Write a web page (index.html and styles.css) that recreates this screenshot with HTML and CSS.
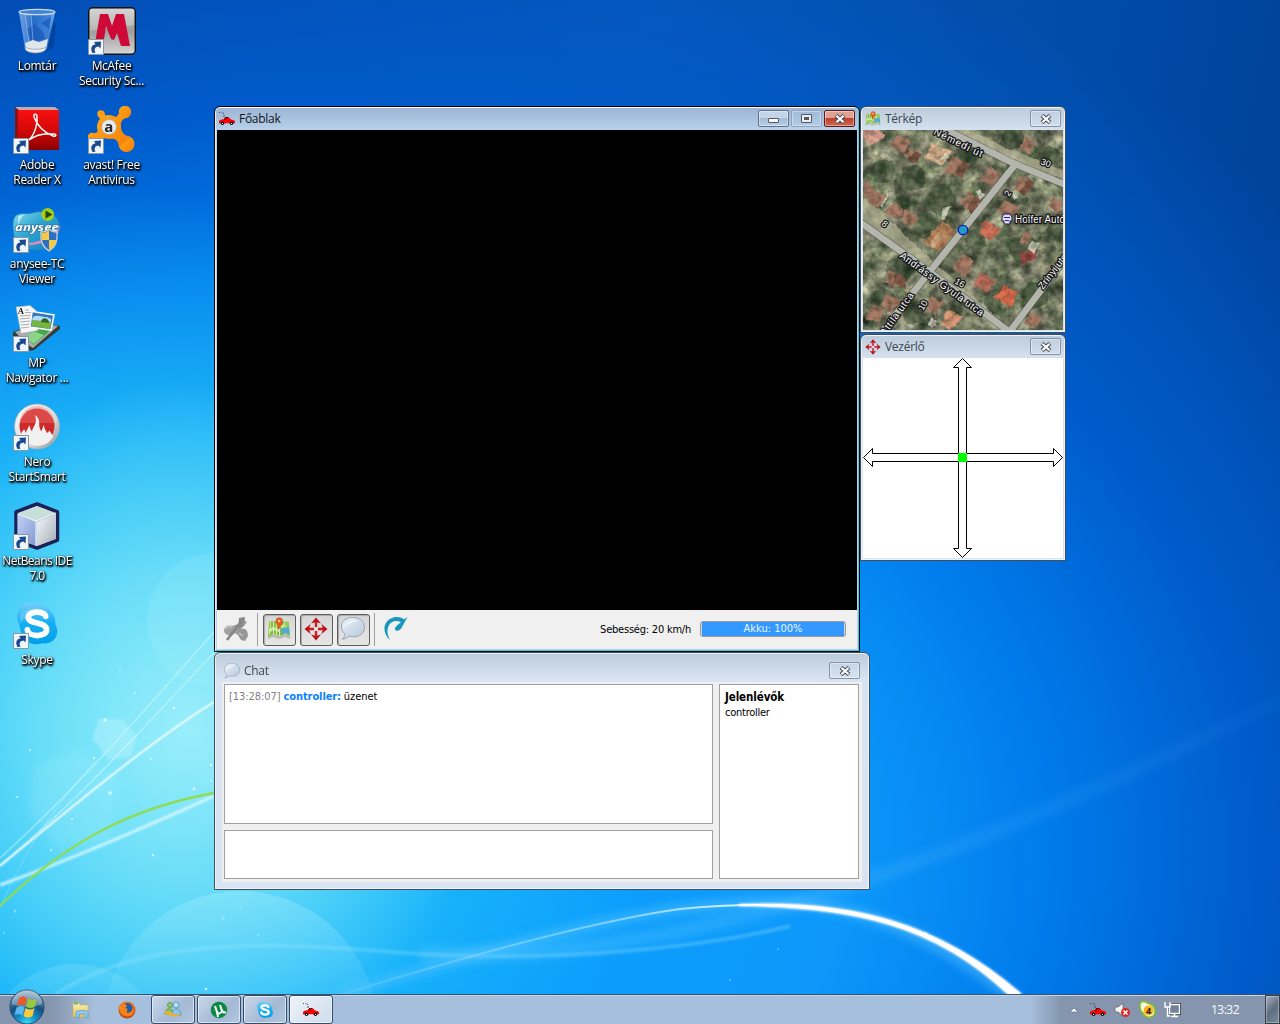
FILE: index.html
```html
<!DOCTYPE html>
<html lang="hu">
<head>
<meta charset="utf-8">
<title>Főablak</title>
<link rel="stylesheet" href="styles.css">
</head>
<body>
<svg width="0" height="0" class="defs">
  <defs>
    <linearGradient id="gGray" x1="0" y1="0" x2="0" y2="1"><stop offset="0" stop-color="#c8c8c8"/><stop offset=".5" stop-color="#9c9c9c"/><stop offset="1" stop-color="#d6d6d6"/></linearGradient>
    <linearGradient id="gBin" x1="0" y1="0" x2="1" y2="0"><stop offset="0" stop-color="#9cc3f4" stop-opacity=".75"/><stop offset=".4" stop-color="#3878d0" stop-opacity=".7"/><stop offset=".85" stop-color="#5b9be8" stop-opacity=".7"/><stop offset="1" stop-color="#b7d5fa" stop-opacity=".8"/></linearGradient>
    <linearGradient id="gRed" x1="0" y1="0" x2="0" y2="1"><stop offset="0" stop-color="#f81010"/><stop offset=".5" stop-color="#d40808"/><stop offset="1" stop-color="#8c0000"/></linearGradient>
    <linearGradient id="gOrange" x1="0" y1="0" x2="1" y2="1"><stop offset="0" stop-color="#ffae18"/><stop offset="1" stop-color="#f77c08"/></linearGradient>
    <linearGradient id="gAny" x1="0" y1="0" x2="1" y2="1"><stop offset="0" stop-color="#7fdcee"/><stop offset=".45" stop-color="#2aa3d2"/><stop offset="1" stop-color="#1780bd"/></linearGradient>
    <linearGradient id="gSilver" x1="0" y1="0" x2="1" y2="1"><stop offset="0" stop-color="#fafafa"/><stop offset=".6" stop-color="#dadada"/><stop offset="1" stop-color="#8e8e8e"/></linearGradient>
    <linearGradient id="gSkype" x1="0" y1="0" x2="0" y2="1"><stop offset="0" stop-color="#75d0fa"/><stop offset=".45" stop-color="#1cb0f4"/><stop offset="1" stop-color="#009fe8"/></linearGradient>
    <linearGradient id="gCubeL" x1="0" y1="0" x2="1" y2="1"><stop offset="0" stop-color="#c3d3f4"/><stop offset="1" stop-color="#8397d2"/></linearGradient>
    <linearGradient id="gCubeR" x1="0" y1="0" x2="1" y2="1"><stop offset="0" stop-color="#f4f9fc"/><stop offset="1" stop-color="#a3acb4"/></linearGradient>
    <linearGradient id="gBubble" x1="0" y1="0" x2="1" y2="1"><stop offset="0" stop-color="#eef3f8"/><stop offset="1" stop-color="#b4c5d8"/></linearGradient>
    <linearGradient id="gFolder" x1="0" y1="0" x2="0" y2="1"><stop offset="0" stop-color="#fbf0b4"/><stop offset="1" stop-color="#e4bf58"/></linearGradient>
    <radialGradient id="gOrb" cx=".5" cy="1" r="1"><stop offset="0" stop-color="#35e6ff"/><stop offset=".28" stop-color="#1594cc"/><stop offset=".6" stop-color="#174f80"/><stop offset="1" stop-color="#9fb8cc"/></radialGradient>
    <radialGradient id="gFox" cx=".5" cy=".4" r=".6"><stop offset="0" stop-color="#ffb225"/><stop offset=".7" stop-color="#ec6a10"/><stop offset="1" stop-color="#ae3306"/></radialGradient>
    <symbol id="shortcut" viewBox="0 0 16 16">
      <path d="M.5.5h15v15H.5z" fill="#eef5fb" stroke="#8d979f"/>
      <path d="M4.500 14C2 9.500 3.500 6 7.500 5.300L6 3l7-.6-.5 7-2-2C7.500 7.500 5.500 10 7.500 13.800z" fill="#1c4890"/>
    </symbol>
    <symbol id="car" viewBox="0 0 16 16">
      <path d="M0 1.500h1M2.500 1.500h1M4 2.500h1M5 4v2" stroke="#40505c" fill="none"/>
      <path d="M5 8l1-1.500h4l2 2 3 .8 1 1v2H0V10l1-1z" fill="#f00"/>
      <path d="M6 6.500h3.500M5 8h2" stroke="#200" stroke-width=".8"/>
      <circle cx="3.500" cy="12.300" r="1.700"/><circle cx="12.500" cy="12.300" r="1.700"/>
      <path d="M3 12h1v1H3zM12 12h1v1h-1z" fill="#fff"/>
    </symbol>
    <symbol id="mapicon" viewBox="0 0 24 24">
      <path d="M2 5l4-1v14l-5 2zM7 4l5 1v14l-5-2zM13 5l4-1 1 14-5 1z" fill="#7fc038"/>
      <path d="M18 4l4 1 1 15-4-2z" fill="#94cc4c"/>
      <path d="M2 12l4-2v3l-4 3zM7 10l5 3v2l-5-2zM3 5h1l-1 13H2zM9 5h1v13H9zM14 9l3-2v3l-3 1z" fill="#d7eca0"/>
      <path d="M14 12l8-2 .7 8-3-2-5 1z" fill="#54a9dc"/>
      <path d="M1 20l5-3 6 2 6-2 5 3v2l-5-2-6 2-6-2-5 2z" fill="#b7bfb0"/>
      <path d="M12 12c-1-4-3-5-3-8a3 3 0 0 1 6.500 0c0 3-2.500 4-3.500 8z" fill="#f0581c" stroke="#c84010" stroke-width=".5"/>
      <circle cx="12.200" cy="4" r="1.200" fill="#ffd8a8"/>
    </symbol>
    <symbol id="move" viewBox="0 0 24 24">
      <path d="M12 10V4M12 14v6M10 12H4M14 12h6" stroke="#cc1c22" stroke-width="2.400"/>
      <path d="M12 .5l5 6-5-1.500-5 1.500zM12 23.500l5-6-5 1.500-5-1.500zM.5 12l6-5L5 12l1.500 5zM23.500 12l-6-5 1.500 5-1.500 5z" fill="#bb1219"/>
      <path d="M12 10.500v3M10.500 12h3" stroke="#ecd4d4"/>
    </symbol>
    <symbol id="bubble" viewBox="0 0 24 24">
      <path d="M4 17C-1 13-1 5 5 2c7-4 18-1 18.500 7.500C24 18 15 21.500 8 19c-2 2-4 3-7 3 2-1 3-3 3-5z" fill="url(#gBubble)" stroke="#8b9fb2" stroke-width=".9"/>
      <path d="M4 10C5 4 12 2 17 4 11 5 7 7 4 10z" fill="#fff" opacity=".6"/>
    </symbol>
    <symbol id="x" viewBox="0 0 12 10">
      <path d="M2 1.500L10 8.500M10 1.500L2 8.500" stroke="#474e5e" stroke-width="4.200"/>
      <path d="M2.400 1.800L9.600 8.200M9.600 1.800L2.400 8.200" stroke="#fff" stroke-width="2.200"/>
    </symbol>
    <symbol id="skypeIcon" viewBox="0 0 48 48">
      <path d="M24 4c12 0 20 10 19 20 6 10-1 22-13 20-13 4-23-4-24-18C-1 13 7-1 20 2z" fill="url(#gSkype)"/>
      <path d="M6 16c4-9 16-10 25-6 3 5-20 4-25 14z" fill="#fff" opacity=".18"/>
      <path d="M33 16c-1-6-18-6-18 1 0 8 19 4 19 13 0 8-19 8-20 0" fill="none" stroke="#fff" stroke-width="6" stroke-linecap="round"/>
    </symbol>
  </defs>
</svg>

<main class="desktop">
  <svg class="wallpaper" viewBox="0 0 1280 1024" width="1280" height="1024">
    <defs>
      <filter id="b1"><feGaussianBlur stdDeviation="1"/></filter>
      <filter id="b5" x="-.1" y="-.3" width="1.200" height="1.600"><feGaussianBlur stdDeviation="5"/></filter>
      <linearGradient id="arc" gradientUnits="userSpaceOnUse" x1="340" y1="0" x2="780" y2="0"><stop offset="0" stop-color="#8ad8ff" stop-opacity=".2"/><stop offset=".65" stop-color="#a9e2ff" stop-opacity=".7"/><stop offset="1" stop-color="#fff"/></linearGradient>
      <linearGradient id="ray" gradientUnits="userSpaceOnUse" x1="60" y1="0" x2="1270" y2="0"><stop offset="0" stop-color="#8ee4ff" stop-opacity=".4"/><stop offset=".55" stop-color="#5cc6ff" stop-opacity=".4"/><stop offset="1" stop-color="#3c9bf0" stop-opacity=".1"/></linearGradient>
      <linearGradient id="disc" x1="0" y1="0" x2="0" y2="1"><stop offset="0" stop-color="#bdf3fb" stop-opacity=".3"/><stop offset=".5" stop-color="#7fe0fb" stop-opacity=".06"/></linearGradient>
    </defs>
    <circle cx="240" cy="1028" r="137" fill="url(#disc)"/>
    <circle cx="75" cy="1054" r="90" fill="url(#disc)" opacity=".6"/>
    <circle cx="214" cy="620" r="67" fill="#c6f8ff" opacity=".13" filter="url(#b1)"/>
    <path d="M99 719l23 0 15 18-7 20-22 3-16-22z" fill="#d5faff" opacity=".3" filter="url(#b1)"/>
    <path d="M35 765l45-15 40 30-10 60-50 12-30-40z" fill="#c8f8ff" opacity=".15" filter="url(#b5)"/>
    <path d="M0 858C70 795 140 716 214 632M0 865C80 800 145 725 214 653" fill="none" stroke="#dcfbff" stroke-width="1.500" opacity=".45"/>
    <path d="M0 866C80 800 150 742 214 702" fill="none" stroke="#fff" stroke-width="2" opacity=".7" filter="url(#b1)"/>
    <path d="M0 866C80 800 150 742 214 702" fill="none" stroke="#fff" stroke-width="1.200" opacity=".6"/>
    <path d="M0 908C30 840 60 800 95 762" fill="none" stroke="#fff" opacity=".2"/>
    <path d="M0 885C70 860 150 825 214 796" fill="none" stroke="#e8fcff" stroke-width="3" opacity=".8" filter="url(#b1)"/>
    <path d="M0 906C65 843 130 808 214 793" fill="none" stroke="#8edb55" stroke-width="2.300"/>
    <path d="M420 954C700 966 980 850 1280 700" fill="none" stroke="url(#ray)" stroke-width="14" filter="url(#b5)" opacity=".8"/>
    <path d="M55 995C150 930 300 945 420 954C560 962 700 948 790 926" fill="none" stroke="#a4e8ff" stroke-width="4" opacity=".28" filter="url(#b1)"/>
    <path d="M340 995C470 955 600 920 680 909C820 890 900 910 1016 1000" fill="none" stroke="#59c5ff" stroke-width="10" opacity=".55" filter="url(#b5)"/>
    <path d="M340 995C470 955 600 920 680 909C720 905 750 904.500 780 905.500" fill="none" stroke="url(#arc)" stroke-width="2"/>
    <path d="M740 904.500C850 900 938 922 1021 994L1008 994C935 925 855 907 740 905.500z" fill="#fff" stroke="#fff" stroke-width="1.500" filter="url(#b1)"/>
    <path d="M740 904.500C850 900 938 922 1021 994L1008 994C935 925 855 907 740 905.500z" fill="#fff"/>
    <g fill="#fff" opacity=".7">
      <circle cx="105" cy="720" r="1.800"/><circle cx="174" cy="708" r="1.300"/><circle cx="110" cy="793" r="1.800"/><circle cx="194" cy="789" r="1.400"/><circle cx="211" cy="765" r="1.300"/><circle cx="211" cy="781" r="1"/><circle cx="151" cy="759" r="1"/><circle cx="94" cy="758" r="1.200"/><circle cx="30" cy="750" r="1"/><circle cx="72" cy="819" r="1"/><circle cx="51" cy="850" r="1"/><circle cx="17" cy="797" r="1"/><circle cx="153" cy="855" r="1.200"/><circle cx="206" cy="989" r="1.300"/><circle cx="926" cy="933" r="1.500" opacity=".6"/><circle cx="778" cy="949" r="1" opacity=".5"/><circle cx="730" cy="980" r="1" opacity=".5"/><circle cx="223" cy="918" r="2" opacity=".3"/><circle cx="241" cy="907" r="1.500" opacity=".3"/><circle cx="258" cy="935" r="1.200" opacity=".4"/><circle cx="15" cy="911" r="1.500" opacity=".5"/><circle cx="4" cy="933" r="1" opacity=".6"/><circle cx="120" cy="670" r="1" opacity=".6"/><circle cx="135" cy="693" r="1" opacity=".7"/>
    </g>
  </svg>

  <nav class="icons">
    <div class="item">
      <svg viewBox="0 0 48 48"><path d="M14 43c8 4 20 3 27-3l2-25z" fill="#032c70" opacity=".35"/><path d="M6 5l6 37c4 4 18 4 22 0l8-37z" fill="url(#gBin)"/><path d="M14 22l8-5 8 8 2 7-14 3zM28 16l10-6-2 12z" fill="#1858b8" opacity=".7"/><path d="M12 36l8-3 6 2 9-3-2 10c-3 3-17 3-20 0z" fill="#dfe7ed"/><path d="M12 40c4 3 18 3 21 0l-.5 3c-4 4-16 4-20 0z" fill="#eee" stroke="#8495a5" stroke-width=".7"/><path d="M12 7l4 30M18 8l2 26" stroke="#dcecff" opacity=".4"/><ellipse cx="24" cy="5" rx="18" ry="2.700" fill="#4383d0" stroke="#c6d7e8" stroke-width="1.300"/></svg>
      <span>Lomtár</span>
    </div>
    <div class="item">
      <svg viewBox="0 0 48 48"><rect x=".7" y=".7" width="46.600" height="46.600" rx="4" fill="url(#gGray)" stroke="#111" stroke-width="1.400"/><path d="M2 2h44v16L2 24z" fill="#fff" opacity=".25"/><path d="M6.500 39L12 7l8 0 4 12 4-12 8 0 6 32h-9l-4-13-3 7-3-1-5-13-3 20z" fill="#ce0837"/><use href="#shortcut" x="0" y="32" width="16" height="16"/></svg>
      <span>McAfee<br>Security Sc...</span>
    </div>
    <div class="item">
      <svg viewBox="0 0 48 48"><path d="M3 1h39l4 3v40H5L2 42z" fill="#c8a8a8"/><path d="M2 2h1l3 2v40l-4-2z" fill="#8e1010"/><path d="M5 4h41v40H5z" fill="url(#gRed)"/><path d="M16 34c6-6 9-17 8-24-1-3-4-2-3 1 3 8 9 15 19 19 3 1 4-2 1-2-8-1-17 0-25 6" fill="none" stroke="#fff" stroke-width="1.500"/><use href="#shortcut" x="0" y="32" width="16" height="16"/></svg>
      <span>Adobe<br>Reader X</span>
    </div>
    <div class="item">
      <svg viewBox="0 0 48 48"><g fill="url(#gOrange)"><circle cx="37" cy="6" r="6.200"/><circle cx="13" cy="8" r="3.700"/><circle cx="38.500" cy="38" r="8"/><circle cx="4" cy="31" r="4.200"/><circle cx="21" cy="21" r="12"/><path d="M24 11c5 1 7-2 8-8l9 8c-6 1-9 4-8 11 1 6 5 8 10 9l-12 10c0-8-6-9-12-9-7 0-9 0-13 3l-4-8c5 1 8 0 9-4 1-7 3-9-1-13l6-4c1 5 4 5 8 5z"/></g><circle cx="21" cy="21" r="7.500" fill="#e9eaec" stroke="#b9a58d" stroke-width=".8"/><text x="20.800" y="26" class="a">a</text><use href="#shortcut" x="0" y="32" width="16" height="16"/></svg>
      <span>avast! Free<br>Antivirus</span>
    </div>
    <div class="item">
      <svg viewBox="0 0 48 48"><path d="M1 13C5 6 13 10 19 8s14-2 20 2c7 3 9 9 6 15 0 9-6 18-16 20-11 1-24-1-27-10C0 27-1 19 1 13z" fill="url(#gAny)" stroke="#1c7cb6" stroke-width=".8"/><path d="M5 28C4 20 7 12 13 9l-8 2z" fill="#fff" opacity=".55"/><path d="M15 38c14-1 24-7 33-18l-3 8C36 36 28 40 16 40z" fill="#d98bc7"/><text x="2" y="26" class="any" textLength="44" lengthAdjust="spacingAndGlyphs">anysee</text><circle cx="34.700" cy="9.500" r="6.500" fill="#a3ce1c"/><path d="M32.500 5.500l7 4-7 4z" fill="#27431a"/><path d="M28 27c4 0 6-1 8-3 2 2 5 3 8 3 1 9-1 15-8 19-7-4-9-10-8-19z" fill="#2c6fc4" stroke="#cdd3d9" stroke-width="1.300"/><path d="M36 25v10h-7.500l0-7c4 0 6-1 7.500-3zM36 35h7.500c-1 5-3 8-7.500 10z" fill="#f5cb45"/><use href="#shortcut" x="0" y="32" width="16" height="16"/></svg>
      <span>anysee-TC<br>Viewer</span>
    </div>
    <div class="item">
      <svg viewBox="0 0 48 48"><path d="M0 28l25-10 22 4v3L21 46l-4 1L0 32z" fill="#363d38"/><path d="M2 28l23-9 20 3-25 22-6-4z" fill="#a9aeb0"/><path d="M12 34l14-12 14 2-19 17z" fill="#46a84c"/><path d="M12 34l8-7 11 4-10 9z" fill="#8bd48a"/><path d="M3 3l14-1.500 6 5 2 20-17 3z" fill="#f5f6f6" stroke="#a9adaf" stroke-width=".6"/><path d="M12 6h4M12 8.500h7M7 12l13-1M7 15l10-1M7 18l10-1M8 21l10-1M8 24l8-1" stroke="#999" stroke-width=".8"/><text x="5" y="10" class="mp">A</text><path d="M19 7.500L41 11 38 26 17 23z" fill="#2f77c6" stroke="#f7f7f7" stroke-width="1.600"/><path d="M19 16l19 2-1 7-18-3z" fill="#77b53c"/><path d="M20 13c4-3 9 0 14 0l4 2v3l-19-2z" fill="#b6ddf5"/><path d="M28 18c0-5 8-5 8 1z" fill="#2d682b"/><use href="#shortcut" x="0" y="32" width="16" height="16"/></svg>
      <span>MP<br>Navigator ...</span>
    </div>
    <div class="item">
      <svg viewBox="0 0 48 48"><circle cx="24" cy="23.500" r="22.500" fill="url(#gSilver)" stroke="#a9b2b7" stroke-width=".7"/><circle cx="24" cy="23" r="17.500" fill="#cd2929"/><path d="M7 20a17 17 0 0 1 34 0z" fill="#f07d78" opacity=".4"/><path d="M8 33c0-4 2-5 3-7l2 4c1-5 3-5 3-8 2 3 1 5 3 6 1-5 6-7 3-16 7 5 2 9 6 16 2-1 1-4 3-6 0 4 2 5 3 8 2-1 2-2 2-3 2 4 4 4 4 7-7 12-25 12-32-1z" fill="#f1f1f1"/><use href="#shortcut" x="0" y="32" width="16" height="16"/></svg>
      <span>Nero<br>StartSmart</span>
    </div>
    <div class="item">
      <svg viewBox="0 0 48 48"><path d="M24 2l20.500 8v28L24 46 3 38V10z" fill="#a8b5ca" stroke="#1a2258" stroke-width="3.500" stroke-linejoin="round"/><path d="M4.500 12L23 20v24L4.500 37z" fill="url(#gCubeL)"/><path d="M43 12L24 20v24l19-7z" fill="url(#gCubeR)"/><path d="M24 4l18.500 7L23 19 5 11z" fill="#c8ded9"/><path d="M5 12l18 7 20-8M23 19v25" fill="none" stroke="#eaf6fb" stroke-width="1.200"/><use href="#shortcut" x="0" y="32" width="16" height="16"/></svg>
      <span class="tight">NetBeans IDE<br>7.0</span>
    </div>
    <div class="item">
      <svg viewBox="0 0 48 48"><use href="#skypeIcon" x="1" y="0" width="46" height="46"/><use href="#shortcut" x="0" y="32" width="16" height="16"/></svg>
      <span>Skype</span>
    </div>
  </nav>

  <section class="window main-window">
    <header><svg class="i16"><use href="#car" width="16" height="16"/></svg><h1>Főablak</h1>
      <div class="ctl"><b><i class="min"></i></b><b class="dim"><i class="max"></i></b><b class="red"><svg width="12" height="10"><use href="#x" width="12" height="10"/></svg></b></div></header>
    <div class="video"></div>
    <footer>
      <svg class="plug" viewBox="0 0 26 26"><path d="M9 10l7-2 3-6 3-1v4l2 1-3 4-3 2 2 2 4 1 1 5-3 5-4-1-2-4-4-3z" fill="#9a9a9a"/><path d="M16 2l5-1-1 10-5 2z" fill="#8a8a8a"/><ellipse cx="7" cy="14.500" rx="6" ry="5" fill="#a2a2a2"/><ellipse cx="20" cy="18" rx="4.500" ry="5.500" fill="#979797"/><path d="M4 24L20 3" stroke="#858585" stroke-width="2.500"/><path d="M3 13c1-2 4-3 6-2M16 17l4 3" stroke="#c4c4c4" fill="none" stroke-width="1.500"/></svg>
      <span class="sep"></span>
      <button><svg width="24" height="24"><use href="#mapicon" width="24" height="24"/></svg></button>
      <button><svg width="24" height="24"><use href="#move" width="24" height="24"/></svg></button>
      <button><svg width="26" height="24"><use href="#bubble" width="26" height="24"/></svg></button>
      <span class="sep s2"></span>
      <svg class="gauge" viewBox="0 0 24 26"><path d="M6 24C-2 17-1 6 7 2.500 12 0 18 1 20 3.500l3.500-2.500L18 11c-1.500 4-6.500 5-7 2-.5-2 3-4 6-7-5-2-10-1-12.500 4-2 5-1 9 1.500 14z" fill="#1697bb"/></svg>
      <span class="speed">Sebesség: 20 km/h</span>
      <span class="battery"><span>Akku: 100%</span></span>
    </footer>
  </section>

  <section class="window inactive tool map-window">
    <header><svg class="i16"><use href="#mapicon" width="16" height="16"/></svg><h1>Térkép</h1><b><svg width="12" height="10"><use href="#x" width="12" height="10"/></svg></b></header>
    <svg class="map" viewBox="0 0 200 200" width="200" height="200">
      <defs>
        <filter id="ground" x="0" y="0" width="1" height="1" color-interpolation-filters="sRGB"><feTurbulence type="fractalNoise" baseFrequency=".06" numOctaves="4" seed="11"/><feColorMatrix values=".8 .5 0 0 -.17  .7 .55 0 0 -.12  .65 .4 0 0 -.12  0 0 0 0 1"/></filter>
        <filter id="rough" x="-.05" y="-.05" width="1.100" height="1.100" color-interpolation-filters="sRGB"><feTurbulence type="fractalNoise" baseFrequency=".1" numOctaves="2" seed="4" result="n"/><feDisplacementMap in="SourceGraphic" in2="n" scale="6" xChannelSelector="R" yChannelSelector="G"/><feGaussianBlur stdDeviation=".6"/></filter>
        <filter id="grain" x="0" y="0" width="1" height="1" color-interpolation-filters="sRGB"><feTurbulence type="fractalNoise" baseFrequency=".16" numOctaves="3" seed="8"/><feColorMatrix values="0 0 0 0 .08  0 0 0 0 .1  0 0 0 0 .06  2.200 1 0 0 -1.300"/></filter>
      </defs>
      <rect width="200" height="200" filter="url(#ground)"/>
      <g filter="url(#rough)">
        <g fill="#2b4029" opacity=".45"><circle cx="20" cy="42" r="12"/><circle cx="50" cy="48" r="13"/><circle cx="78" cy="70" r="15"/><circle cx="62" cy="96" r="13"/><circle cx="40" cy="72" r="8"/><circle cx="160" cy="118" r="14"/><circle cx="112" cy="110" r="11"/><circle cx="36" cy="140" r="13"/><circle cx="20" cy="170" r="12"/><circle cx="172" cy="165" r="13"/><circle cx="92" cy="182" r="8"/><circle cx="105" cy="22" r="11"/><circle cx="150" cy="8" r="11"/><circle cx="188" cy="25" r="8"/><circle cx="130" cy="175" r="9"/><circle cx="192" cy="100" r="8"/><circle cx="50" cy="185" r="10"/></g>
        <g fill="#a87c67"><path d="M90 25l18 10-10 14-17-9z"/><path d="M35 4l13 8-9 11-12-7z"/><path d="M45 17l14 8-8 7-10-6z"/><path d="M2 50l9 6-4 13-7-4z"/><path d="M10 61l14 6-9 11-11-7z"/><path d="M29 73l13 7-8 9-13-6z"/><path d="M43 80l14 6-7 12-13-9z"/><path d="M105 62l15 8-12 14-12-10z"/><path d="M126 37l13 7-10 12-12-6z"/><path d="M156 46l15 7-9 13-12-6z"/><path d="M141 71l17 7-10 9-14-6z"/><path d="M163 7l10 8-8 8-9-6z"/><path d="M99 125l12 6-9 16-13-9z"/><path d="M25 141l18 7-8 10-14-5z"/><path d="M25 164l14 8-12 10-11-7z"/><path d="M8 175l14 5-6 12-13-3z"/><path d="M68 165l12 8-8 12-10-7z"/><path d="M169 183l11 6-8 11-10-7z"/><path d="M190 67l11 6-6 10-10-7z"/><path d="M161 101l9 5-6 9-8-4z"/></g>
        <g fill="#805746"><path d="M98 49l10-14-9-5-9 14zM108 84l12-14-7-4-10 13zM162 66l9-13-7-3-8 13zM51 32l8-7-7-4-7 8zM43 158l0-10-9-4-5 10z"/></g>
        <path d="M79 91l14 11-17 20-15-10z" fill="#b7825c"/><path d="M118 143l15 9-9 10-13-9z" fill="#c0705c"/><path d="M141 154l14 10-8 13-16-9z" fill="#e0704f"/><path d="M122 90l14 10-8 10-12-7z" fill="#d2735a"/><path d="M155 124l16-5 3 9-14 7z" fill="#9a4c46"/><path d="M86 179l15 7-14 15-10-5z" fill="#dc9a78"/><path d="M0 0h16l5 8-17 9z" fill="#dfa594"/><path d="M68 14l20 6-8 14-18-5z" fill="#dcb48f"/><path d="M77 101l6 4-13 13-5-3z" fill="#e6bd91" opacity=".7"/>
        <g fill="#e7e8d7" opacity=".75"><path d="M80 78l9-2-7 15-5-3zM116 60l5 5-2 3-5-5zM67 187l8 3-6 9-4-4zM73 32l10-8 3 3zM168 110l8 4-6 9-4-4zM150 62l5 4-3 3zM24 57l2 8-6 12-2-1 5-10z"/></g>
      </g>
      <rect width="200" height="200" filter="url(#grain)" opacity=".35"/>
      <path d="M0 71L66 134 142 201M-3 82L68 136M80-6L150 25 203 46" fill="none" stroke="#b7b598" stroke-width="9" opacity=".65" filter="url(#rough)"/>
      <g fill="none" stroke="#4f5349" stroke-width="8" opacity=".6"><path d="M75-4L150 33 203 55M151 36L68 140 14 208M-3 92L68 143 148 203M145 204L203 127"/></g>
      <g fill="none" stroke="#b4b6ae" stroke-width="6.500"><path d="M75-4L150 33 203 55M151 36L68 140 14 208M-3 92L68 143 148 203M145 204L203 127"/></g>
      <g class="street">
        <text transform="translate(70 4) rotate(26)" textLength="53">Némedi út</text>
        <text transform="translate(36 127) rotate(36)" textLength="101">Andrássy Gyula utca</text>
        <text transform="translate(22 206) rotate(-54)" textLength="50">Attila utca</text>
        <text transform="translate(180 160) rotate(-53)">Zrínyi utca</text>
        <text x="152" y="93" textLength="50">Hoffer Autó</text>
        <text class="no" transform="translate(177 34) rotate(20)">30</text>
        <text class="no" transform="translate(146 67) rotate(-58)">2</text>
        <text class="no" transform="translate(18 95) rotate(35)">8</text>
        <text class="no" transform="translate(91 153) rotate(30)">16</text>
        <text class="no" transform="translate(60 181) rotate(-60)">10</text>
      </g>
      <path d="M141 84h6l2 3v4h-2v3h-6v-3h-2v-4z" fill="#ddd9ff" stroke="#1c1a38"/><path d="M141 87.500h6M142 90.500h4" stroke="#322f60"/>
      <circle cx="100" cy="100" r="4.700" fill="#249ac8" stroke="#0818b0" stroke-width="1.200"/>
    </svg>
  </section>

  <section class="window inactive tool pad-window">
    <header><svg class="i16"><use href="#move" width="16" height="16"/></svg><h1>Vezérlő</h1><b><svg width="12" height="10"><use href="#x" width="12" height="10"/></svg></b></header>
    <svg class="pad" viewBox="0 0 200 200" width="200" height="200">
      <path d="M95.500 95.500V9.500h-5L99.500.5l9 9h-5v86h87v-5l9 9-9 9v-5h-87v87h5l-9 9-9-9h5v-87H9.500v5L.5 99.500l9-9v5z" fill="#fff" stroke="#000"/>
      <path d="M95 95h9v9h-9z" fill="#0f0"/>
    </svg>
  </section>

  <section class="window inactive chat-window">
    <header><svg class="i16"><use href="#bubble" width="16" height="16"/></svg><h1>Chat</h1><b><svg width="12" height="10"><use href="#x" width="12" height="10"/></svg></b></header>
    <div class="chat">
      <div class="box log"><time>[13:28:07]</time> <strong>controller:</strong> <span>üzenet</span></div>
      <div class="box users"><strong>Jelenlévők</strong><span>controller</span></div>
      <div class="box entry"></div>
    </div>
  </section>
</main>

<div class="taskbar">
  <svg class="orb" viewBox="0 0 36 36"><circle cx="18" cy="18" r="17" fill="url(#gOrb)" stroke="#25486a"/><path d="M3 15a15 14 0 0 1 30 0c-8 4-22 4-30 0z" fill="#fff" opacity=".3"/><path d="M10 9c3-2 5-2 8 0l-2 8c-3-2-5-2-8 0z" fill="#ee5a26"/><path d="M19 9.500c3 2 6 2 9 0l-2 8c-3 2-6 2-9 0z" fill="#98c83c"/><path d="M7.500 18.500c3-2 5-2 8 0l-2 8c-3-2-5-2-8 0z" fill="#5bb8ee"/><path d="M16.500 19c3 2 6 2 9 0l-2 8c-3 2-6 2-9 0z" fill="#fbcb35"/></svg>
  <svg class="q explorer" viewBox="0 0 18 18"><path d="M1 2h6l1 2h8v12H1z" fill="url(#gFolder)" stroke="#cfae58" stroke-width=".6"/><path d="M2 1.500h4v2H2z" fill="#5cc05c"/><path d="M4 17v-6c0-2 12-2 12 0v6h-3v-4H7v4z" fill="#8fcdf0" stroke="#4a97cb" stroke-width=".7"/></svg>
  <svg class="q fox" viewBox="0 0 18 18"><circle cx="9" cy="9" r="8.500" fill="url(#gFox)"/><circle cx="9.500" cy="7" r="5" fill="#2759a5"/><path d="M1 4l2 1C5 2 8 3 9 5l-2 2c2 0 3 1 2 3-1 3 5 3 7-2 0 6-4 8-8 7-4 0-8-6-7-11z" fill="#f4831b"/></svg>
  <div class="tasks">
    <div class="task"><svg width="18" height="18" viewBox="0 0 18 18"><circle cx="6" cy="4" r="2.500" fill="#8ccb6c" stroke="#4b9440" stroke-width=".8"/><path d="M1 13c0-7 8-7 9 0z" fill="#86c565" stroke="#4b9440" stroke-width=".8"/><circle cx="12" cy="4" r="3" fill="#b4dcf4" stroke="#4a8cbd" stroke-width=".8"/><path d="M8 14c0-8 8-8 9 0z" fill="#8cc8ec" stroke="#4a8cbd" stroke-width=".8"/><path d="M1 10c6 0 7 5 16 3-6 5-10 1-16 0z" fill="#f5ad25"/></svg></div>
    <div class="task"><svg width="18" height="18" viewBox="0 0 18 18"><circle cx="9" cy="9" r="8.300" fill="#0b8a42"/><path d="M5 5l2 6c1 2 4 2 5-1L10 4M12 9c1 3 2 3 4 2M7 11l1 5" fill="none" stroke="#fff" stroke-width="2"/></svg></div>
    <div class="task"><svg width="18" height="18"><use href="#skypeIcon" width="18" height="18"/></svg></div>
    <div class="task on"><svg width="16" height="16"><use href="#car" width="16" height="16"/></svg></div>
  </div>
  <div class="tray">
    <svg class="up" width="10" height="6"><path d="M1 5l4-4 4 4z" fill="#fff" stroke="#5e6e80" stroke-width=".6"/></svg>
    <svg width="16" height="16"><use href="#car" width="16" height="16"/></svg>
    <svg width="17" height="16" viewBox="0 0 17 16"><path d="M1 5h3l5-4v13l-5-4H1z" fill="#f5f5f5" stroke="#62656a" stroke-width=".8"/><circle cx="11.500" cy="10.500" r="4.500" fill="#d92a26"/><path d="M9.500 8.500l4 4M13.500 8.500l-4 4" stroke="#fff" stroke-width="1.500"/></svg>
    <svg width="17" height="17" viewBox="0 0 17 17"><path d="M2 1C6-1 7 2 11 3c5 2 6 7 4 11-4 4-10 2-11-2C1 10 0 4 2 1z" fill="#f8ffe9" stroke="#82c41b" stroke-width="1.600"/><circle cx="9.500" cy="9.500" r="5" fill="#ffad20"/><text x="9.500" y="13" class="four">4</text></svg>
    <svg width="17" height="16" viewBox="0 0 17 16"><path d="M5.500 2.500h10v9h-10z" fill="#71839a" stroke="#333b45" stroke-width="3"/><path d="M5.500 2.500h10v9h-10z" fill="#71839a" stroke="#fff" stroke-width="1.300"/><path d="M7 14.500h7M10.500 12v2" stroke="#fff" stroke-width="1.500"/><path d="M1 0v5h5V0M3.500 5v9H6" fill="#8495ad" stroke="#fff" stroke-width="1.400"/></svg>
  </div>
  <div class="clock">13:32</div>
  <div class="peek"></div>
</div>
</body>
</html>
```

FILE: styles.css
```css
* { box-sizing: border-box; }
body { margin: 0; width: 1280px; height: 1024px; overflow: hidden; position: relative; font-family: "DejaVu Sans Condensed", "DejaVu Sans", sans-serif; font-size: 11px; }
.defs { position: absolute; }
.desktop {
  position: relative; width: 1280px; height: 1024px;
  background:
    radial-gradient(ellipse 300px 350px at 190px 730px, rgba(165,241,250,.9), rgba(140,234,248,.65) 45%, rgba(100,220,248,0) 100%),
    radial-gradient(ellipse 540px 540px at 130px 730px, rgba(60,214,250,.95), rgba(38,198,246,.72) 45%, rgba(10,160,240,0) 100%),
    radial-gradient(ellipse 1300px 1000px at 300px 850px, #0aa5ff 0%, #0d98fa 42%, #007cec 57%, rgba(0,92,204,.95) 74%, rgba(2,74,172,0) 100%),
    linear-gradient(100deg, #0440a2 0%, #0754b4 45%, #004ca8 75%, #003c92 100%);
}
.wallpaper { position: absolute; left: 0; top: 0; }

.icons { position: absolute; left: 0; top: 7px; display: grid; grid-template-columns: 74px 75px; grid-auto-rows: 99px; }
.item { display: flex; flex-direction: column; align-items: center; gap: 3px; }
.item:nth-child(n+5) { grid-column: 1; }
.item svg { width: 48px; height: 48px; flex: none; }
.item span { font: 12px/15px "Open Sans", "Noto Sans", sans-serif; letter-spacing: -.32px; color: #fff; text-align: center; white-space: nowrap; text-shadow: 1px 1px 2px #000, 0 1px 2px #000, 1px 1px 3px #000, 1px 2px 2px rgba(0,0,0,.6); }
.item .tight { letter-spacing: -.55px; }
.a { font: bold 15px "Open Sans", sans-serif; text-anchor: middle; fill: #24272e; }
.any { font: italic bold 11px "Open Sans", sans-serif; fill: #fff; stroke: #31688e; stroke-width: 1.2px; paint-order: stroke; }
.mp { font: bold 8px "Liberation Serif", serif; }

.window { position: absolute; border: 1px solid #0a1420; border-radius: 6px 6px 0 0; padding: 0 2px 2px; background: #b9d1ea; box-shadow: inset 0 0 0 1px #e8f4fc; display: flex; flex-direction: column; }
.window header { height: 23px; flex: none; display: flex; align-items: center; position: relative; }
.window h1 { margin: 0 0 0 4px; padding-top: 1px; font: 12px/16px "Open Sans", "Noto Sans", sans-serif; letter-spacing: -.28px; color: #10131a; }
.i16 { width: 16px; height: 16px; margin: 0 0 0 2px; }
header b { width: 31px; height: 17px; border: 1px solid #8293ab; border-radius: 2px; box-shadow: inset 0 0 0 1px rgba(255,255,255,.4); display: flex; align-items: center; justify-content: center; margin-left: auto; }
.main-window { left: 214px; top: 106px; width: 646px; height: 546px; background: linear-gradient(#9bb5d3, #b9d1ea 24px); border-color: #000; box-shadow: inset 0 1px #f4fafe, inset 1px 0 #d8f2fc, inset -1px -1px #36cdea; }
.ctl { margin: 0 2px 0 auto; display: flex; gap: 2px; }
.ctl b { border-color: #5d728f; background: linear-gradient(#c4d5e8 48%, #a3bbd6 50%, #b9cfe6); }
.ctl .dim { border-color: #8da3bf; background: none; }
.ctl .red { border-color: #5a1a20; background: linear-gradient(#e2a293 46%, #bf3f2c 50%, #cf6b4e); }
.min { width: 11px; height: 5px; background: #fff; border: 1px solid #535666; border-radius: 1px; margin-top: 4px; }
.max { width: 11px; height: 9px; border: 1px solid #535666; border-radius: 1px; background: linear-gradient(#535666, #535666) center / 5px 3px no-repeat #e9eef5; }
.video { height: 480px; flex: none; background: #000; }
.main-window footer { height: 39px; flex: none; background: #f0f0f0; display: flex; align-items: center; padding-bottom: 1px; }
.main-window footer button { width: 33px; height: 32px; margin: 1px 4px 0 0; padding: 0 1px 1px 0; border: 1px solid #5c5c5c; border-radius: 3px; background: linear-gradient(#d6d6d6, #e6e6e6); box-shadow: inset 1px 1px 1px #aaa; display: flex; align-items: center; justify-content: center; }
.plug { width: 26px; height: 26px; margin-left: 6px; flex: none; }
.sep { width: 1px; height: 33px; background: #a0a0a0; margin: 0 5px 0 8px; }
.s2 { margin: 0 9px 0 0; }
.gauge { width: 24px; height: 26px; }
.speed { margin-left: auto; letter-spacing: -.22px; }
.battery { width: 146px; height: 16px; margin: 0 11px 0 9px; border: 1px solid #9a9a9a; border-radius: 3px; padding: 0 1px; background: #d8d4d0; }
.battery span { display: block; height: 14px; line-height: 13px; background: #3399ff; color: #eaf4ff; text-align: center; }

.inactive { background: linear-gradient(#bccbdb, #d8e4f1 26px); border-color: #484d55; }
.inactive h1 { color: #3e464f; }
.tool { left: 860px; width: 206px; }
.map-window { top: 106px; height: 227px; }
.pad-window { top: 334px; height: 227px; }
.tool header b { margin-right: 2px; }
.map, .pad { display: block; flex: none; background: #fff; }
.street text { font: 10px "Liberation Sans", sans-serif; fill: #fff; stroke: #151515; stroke-width: 2.6px; paint-order: stroke; stroke-linejoin: round; }
.street .no { font-size: 9px; }

.chat-window { left: 214px; top: 652px; width: 656px; height: 238px; padding: 0 7px 7px; }
.chat-window header { height: 29px; padding-top: 6px; }
.chat-window header b { margin-right: 2px; }
.chat { height: 200px; background: #f0f0f0; padding: 2px 3px 3px 2px; display: grid; grid-template: 140px 49px / 489px 140px; gap: 6px; }
.box { background: #fff; border: 1px solid #a0a0a0; padding: 4px 5px; line-height: 15px; letter-spacing: -.25px; }
.log { padding-left: 4px; }
.log time { color: #808080; letter-spacing: -.05px; }
.log strong { color: #0a80ff; letter-spacing: -.1px; }
.log span { letter-spacing: -.05px; }
.users { grid-column: 2; grid-row: 1 / 3; display: flex; flex-direction: column; padding-top: 5px; }
.users strong { font-size: 11.5px; letter-spacing: -.1px; }

.taskbar { position: absolute; left: 0; top: 994px; width: 1280px; height: 30px; display: flex; align-items: center; border-top: 1px solid #39516a; box-shadow: inset 0 1px #c4d6ea; background: linear-gradient(90deg, #8495ad 0, #8495ad 50px, #a6bfdc 95px, #a6bfdc 1030px, #8495ad 1062px, #8495ad); }
.orb { width: 36px; height: 36px; margin: -5px 0 0 9px; flex: none; }
.q { width: 18px; height: 18px; flex: none; }
.explorer { margin-left: 27px; }
.fox { margin-left: 28px; }
.tasks { display: flex; gap: 2px; margin-left: 15px; align-self: stretch; }
.task { width: 44px; border: 1px solid #364c68; border-radius: 3px; box-shadow: inset 0 0 0 1px rgba(255,255,255,.55); background: linear-gradient(135deg, #c9d7e9, #a4b9d5 60%, #b3c7df); display: flex; align-items: center; justify-content: center; }
.task.on { background: linear-gradient(135deg, #edf3fa, #cfdcec); }
.tray { display: flex; align-items: center; gap: 8px; margin: 0 1px 0 auto; }
.tray .up { margin-right: 3px; }
.four { font: bold 9px "Open Sans", sans-serif; text-anchor: middle; fill: #222; }
.clock { width: 80px; margin-left: 4px; text-align: center; font: 12px "Open Sans", sans-serif; letter-spacing: -.5px; color: #fff; }
.tray + .clock { margin-left: 3px; }
.peek { width: 15px; align-self: stretch; border: 1px solid #35404c; background: linear-gradient(135deg, #a5b1bf, #5e6d7f 50%, #7d8c9f); box-shadow: inset 0 0 0 1px rgba(255,255,255,.3); }
```
